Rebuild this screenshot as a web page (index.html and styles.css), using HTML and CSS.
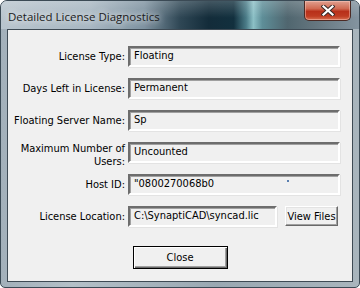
FILE: index.html
```html
<!DOCTYPE html>
<html lang="en">
<head>
  <meta charset="UTF-8">
  <title>Detailed License Diagnostics</title>
  <link rel="stylesheet" href="styles.css">
</head>
<body>
  <div class="window">
    <div class="titlebar">
      <span class="title">Detailed License Diagnostics</span>
      <button class="close-x" type="button" aria-label="Close">
        <svg width="14" height="11" viewBox="0 0 14 11">
          <path d="M2.5 1.5 L11.5 9.5 M11.5 1.5 L2.5 9.5" stroke="#3a2a28" stroke-width="4.2" stroke-linecap="square"/>
          <path d="M2.5 1.5 L11.5 9.5 M11.5 1.5 L2.5 9.5" stroke="#ffffff" stroke-width="2.2" stroke-linecap="square"/>
        </svg>
      </button>
    </div>

    <div class="client">
      <div class="form">
        <label class="lbl">License Type:</label>
        <div class="field">Floating</div>

        <label class="lbl">Days Left in License:</label>
        <div class="field">Permanent</div>

        <label class="lbl">Floating Server Name:</label>
        <div class="field">Sp</div>

        <label class="lbl two-line">Maximum Number of<br>Users:</label>
        <div class="field">Uncounted</div>

        <label class="lbl">Host ID:</label>
        <div class="field">"0800270068b0<span class="mark"></span></div>

        <label class="lbl">License Location:</label>
        <div class="location">
          <div class="field short">C:\SynaptiCAD\syncad.lic</div>
          <button class="btn" type="button">View Files</button>
        </div>
      </div>

      <div class="actions">
        <button class="btn default" type="button">Close</button>
      </div>
    </div>
  </div>
</body>
</html>
```

FILE: styles.css
```css
body {
  margin: 0;
  padding: 0;
  background: #ffffff;
  font-family: "DejaVu Sans Condensed", "DejaVu Sans", sans-serif;
  font-size: 11px;
  color: #000;
}

.window {
  width: 360px;
  height: 288px;
  box-sizing: border-box;
  border: 1px solid #3b4a55;
  border-radius: 7px 7px 5px 5px;
  padding: 0 6px 5px 6px;
  background: linear-gradient(90deg, #a3b0ba 0%, #b4c0c8 20%, #9aa8b2 60%, #a9b5bd 100%);
  overflow: hidden;
}

.titlebar {
  height: 28px;
  margin: 0 -6px;
  padding: 0 8px 0 7px;
  display: flex;
  align-items: flex-start;
  justify-content: space-between;
  background:
    linear-gradient(180deg, rgba(255, 255, 255, 0.2) 0%, rgba(255, 255, 255, 0) 60%),
    linear-gradient(90deg, #b9c5ce 0%, #a8b7c2 25%, #7e92a0 40%, #2f4755 50%, #132c3a 58%, #12303e 65%, #4b7c88 68.5%, #8cc0c6 70.5%, #5e8e98 73%, #50666f 80%, #65767f 88%, #8494a0 100%);
}

.title {
  margin-top: 8px;
  font-family: "Open Sans", "Noto Sans", sans-serif;
  font-size: 11.5px;
  color: #1b1b1b;
  text-shadow: 0 0 6px rgba(255, 255, 255, 0.9), 0 0 10px rgba(255, 255, 255, 0.6);
}

.close-x {
  width: 47px;
  height: 20px;
  margin-right: 0;
  padding: 0;
  border: 1px solid #4c2a24;
  border-top: none;
  border-radius: 0 0 5px 5px;
  background: linear-gradient(180deg, #e0a090 0%, #d06a52 40%, #b8301a 55%, #bf3c22 80%, #d87052 100%);
  box-shadow: inset 0 0 0 1px rgba(255, 210, 200, 0.45);
  display: flex;
  align-items: center;
  justify-content: center;
}

.client {
  height: 253px;
  box-sizing: border-box;
  border: 1px solid #3e4a54;
  background: #f0f0f0;
  padding-top: 16px;
}

.form {
  display: grid;
  grid-template-columns: 117px 212px;
  grid-auto-rows: 21px;
  column-gap: 3px;
  row-gap: 11px;
}

.lbl {
  display: flex;
  align-items: center;
  justify-content: flex-end;
  text-align: right;
  line-height: 13px;
  white-space: nowrap;
}

.lbl.two-line {
  padding-top: 4px;
}

.field {
  box-sizing: border-box;
  height: 21px;
  padding: 1px 4px 0 4px;
  line-height: 13px;
  border-style: solid;
  border-width: 2px;
  border-color: #6d6d6d #ffffff #ffffff #6d6d6d;
  box-shadow: inset 1px 1px 0 #a0a0a0, 1px 1px 0 #e3e3e3;
  background: #f0f0f0;
  white-space: nowrap;
  overflow: hidden;
}

.mark {
  display: inline-block;
  width: 2px;
  height: 2px;
  margin-left: 73px;
  vertical-align: 5px;
  background: #5a7fb0;
}

.location {
  display: flex;
  gap: 8px;
}

.field.short {
  width: 149px;
}

.btn {
  box-sizing: border-box;
  font-family: inherit;
  font-size: 11px;
  color: #000;
  background: #f0f0f0;
  border-style: solid;
  border-width: 1px;
  border-color: #ffffff #696969 #696969 #ffffff;
  box-shadow: inset -1px -1px 0 #a0a0a0, inset 1px 1px 0 #e3e3e3;
  padding: 0;
  width: 53px;
  height: 20px;
}

.actions {
  display: flex;
  justify-content: center;
  margin-top: 19px;
}

.btn.default {
  width: 95px;
  height: 23px;
  border: 1px solid #000;
  box-shadow: inset 1px 1px 0 #ffffff, inset -1px -1px 0 #696969, inset -2px -2px 0 #a0a0a0;
}
```
